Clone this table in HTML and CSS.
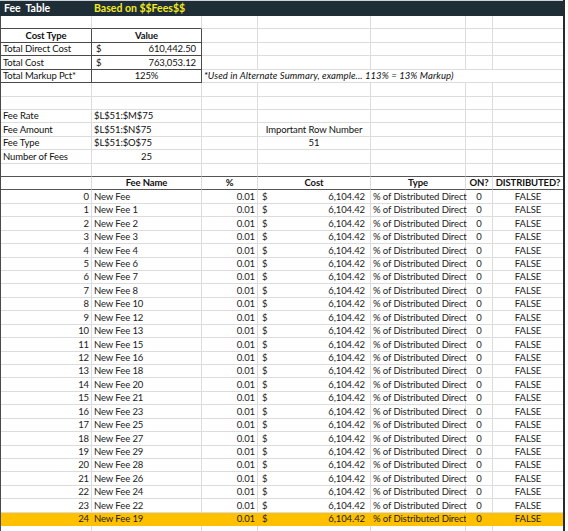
FILE: index.html
```html
<!DOCTYPE html>
<html>
<head>
<meta charset="utf-8">
<link rel="stylesheet" href="styles.css">
</head>
<body>
<div class="sheet">
  <div class="titlebar">
    <div class="t-title">Fee&nbsp; Table</div>
    <div class="t-sub">Based on $$Fees$$</div>
  </div>

  <div class="row"><div class="c bb-dark"></div><div class="c bb-dark"></div><div class="c"></div><div class="c"></div><div class="c"></div><div class="c"></div><div class="c"></div></div>
  <div class="row"><div class="c box b ctr">Cost Type</div><div class="c box b ctr">Value</div><div class="c"></div><div class="c"></div><div class="c"></div><div class="c"></div><div class="c"></div></div>
  <div class="row"><div class="c box">Total Direct Cost</div><div class="c box acct"><span>$</span><span>610,442.50</span></div><div class="c"></div><div class="c"></div><div class="c"></div><div class="c"></div><div class="c"></div></div>
  <div class="row"><div class="c box">Total Cost</div><div class="c box acct"><span>$</span><span>763,053.12</span></div><div class="c"></div><div class="c"></div><div class="c"></div><div class="c"></div><div class="c"></div></div>
  <div class="row"><div class="c box">Total Markup Pct*</div><div class="c box ctr">125%</div><div class="c note">*Used in Alternate Summary, example... 113% = 13% Markup)</div></div>
  <div class="row"><div class="c"></div><div class="c"></div><div class="c"></div><div class="c"></div><div class="c"></div><div class="c"></div><div class="c"></div></div>
  <div class="row"><div class="c"></div><div class="c"></div><div class="c"></div><div class="c"></div><div class="c"></div><div class="c"></div><div class="c"></div></div>
  <div class="row"><div class="c">Fee Rate</div><div class="c">$L$51:$M$75</div><div class="c"></div><div class="c"></div><div class="c"></div><div class="c"></div><div class="c"></div></div>
  <div class="row"><div class="c">Fee Amount</div><div class="c">$L$51:$N$75</div><div class="c"></div><div class="c ctr">Important Row Number</div><div class="c"></div><div class="c"></div><div class="c"></div></div>
  <div class="row"><div class="c">Fee Type</div><div class="c">$L$51:$O$75</div><div class="c"></div><div class="c ctr">51</div><div class="c"></div><div class="c"></div><div class="c"></div></div>
  <div class="row"><div class="c">Number of Fees</div><div class="c ctr">25</div><div class="c"></div><div class="c"></div><div class="c"></div><div class="c"></div><div class="c"></div></div>
  <div class="row rule"><div class="c"></div><div class="c"></div><div class="c"></div><div class="c"></div><div class="c"></div><div class="c"></div><div class="c"></div></div>
  <div class="row rule head"><div class="c"></div><div class="c ctr">Fee Name</div><div class="c ctr">%</div><div class="c ctr">Cost</div><div class="c ctr">Type</div><div class="c ctr">ON?</div><div class="c ctr">DISTRIBUTED?</div></div>

  <div class="row data"><div class="c rt">0</div><div class="c">New Fee</div><div class="c rt">0.01</div><div class="c acct"><span>$</span><span>6,104.42</span></div><div class="c">% of Distributed Direct</div><div class="c ctr">0</div><div class="c ctr">FALSE</div></div>
  <div class="row data"><div class="c rt">1</div><div class="c">New Fee 1</div><div class="c rt">0.01</div><div class="c acct"><span>$</span><span>6,104.42</span></div><div class="c">% of Distributed Direct</div><div class="c ctr">0</div><div class="c ctr">FALSE</div></div>
  <div class="row data"><div class="c rt">2</div><div class="c">New Fee 2</div><div class="c rt">0.01</div><div class="c acct"><span>$</span><span>6,104.42</span></div><div class="c">% of Distributed Direct</div><div class="c ctr">0</div><div class="c ctr">FALSE</div></div>
  <div class="row data"><div class="c rt">3</div><div class="c">New Fee 3</div><div class="c rt">0.01</div><div class="c acct"><span>$</span><span>6,104.42</span></div><div class="c">% of Distributed Direct</div><div class="c ctr">0</div><div class="c ctr">FALSE</div></div>
  <div class="row data"><div class="c rt">4</div><div class="c">New Fee 4</div><div class="c rt">0.01</div><div class="c acct"><span>$</span><span>6,104.42</span></div><div class="c">% of Distributed Direct</div><div class="c ctr">0</div><div class="c ctr">FALSE</div></div>
  <div class="row data"><div class="c rt">5</div><div class="c">New Fee 6</div><div class="c rt">0.01</div><div class="c acct"><span>$</span><span>6,104.42</span></div><div class="c">% of Distributed Direct</div><div class="c ctr">0</div><div class="c ctr">FALSE</div></div>
  <div class="row data"><div class="c rt">6</div><div class="c">New Fee 7</div><div class="c rt">0.01</div><div class="c acct"><span>$</span><span>6,104.42</span></div><div class="c">% of Distributed Direct</div><div class="c ctr">0</div><div class="c ctr">FALSE</div></div>
  <div class="row data"><div class="c rt">7</div><div class="c">New Fee 8</div><div class="c rt">0.01</div><div class="c acct"><span>$</span><span>6,104.42</span></div><div class="c">% of Distributed Direct</div><div class="c ctr">0</div><div class="c ctr">FALSE</div></div>
  <div class="row data"><div class="c rt">8</div><div class="c">New Fee 10</div><div class="c rt">0.01</div><div class="c acct"><span>$</span><span>6,104.42</span></div><div class="c">% of Distributed Direct</div><div class="c ctr">0</div><div class="c ctr">FALSE</div></div>
  <div class="row data"><div class="c rt">9</div><div class="c">New Fee 12</div><div class="c rt">0.01</div><div class="c acct"><span>$</span><span>6,104.42</span></div><div class="c">% of Distributed Direct</div><div class="c ctr">0</div><div class="c ctr">FALSE</div></div>
  <div class="row data"><div class="c rt">10</div><div class="c">New Fee 13</div><div class="c rt">0.01</div><div class="c acct"><span>$</span><span>6,104.42</span></div><div class="c">% of Distributed Direct</div><div class="c ctr">0</div><div class="c ctr">FALSE</div></div>
  <div class="row data"><div class="c rt">11</div><div class="c">New Fee 15</div><div class="c rt">0.01</div><div class="c acct"><span>$</span><span>6,104.42</span></div><div class="c">% of Distributed Direct</div><div class="c ctr">0</div><div class="c ctr">FALSE</div></div>
  <div class="row data"><div class="c rt">12</div><div class="c">New Fee 16</div><div class="c rt">0.01</div><div class="c acct"><span>$</span><span>6,104.42</span></div><div class="c">% of Distributed Direct</div><div class="c ctr">0</div><div class="c ctr">FALSE</div></div>
  <div class="row data"><div class="c rt">13</div><div class="c">New Fee 18</div><div class="c rt">0.01</div><div class="c acct"><span>$</span><span>6,104.42</span></div><div class="c">% of Distributed Direct</div><div class="c ctr">0</div><div class="c ctr">FALSE</div></div>
  <div class="row data"><div class="c rt">14</div><div class="c">New Fee 20</div><div class="c rt">0.01</div><div class="c acct"><span>$</span><span>6,104.42</span></div><div class="c">% of Distributed Direct</div><div class="c ctr">0</div><div class="c ctr">FALSE</div></div>
  <div class="row data"><div class="c rt">15</div><div class="c">New Fee 21</div><div class="c rt">0.01</div><div class="c acct"><span>$</span><span>6,104.42</span></div><div class="c">% of Distributed Direct</div><div class="c ctr">0</div><div class="c ctr">FALSE</div></div>
  <div class="row data"><div class="c rt">16</div><div class="c">New Fee 23</div><div class="c rt">0.01</div><div class="c acct"><span>$</span><span>6,104.42</span></div><div class="c">% of Distributed Direct</div><div class="c ctr">0</div><div class="c ctr">FALSE</div></div>
  <div class="row data"><div class="c rt">17</div><div class="c">New Fee 25</div><div class="c rt">0.01</div><div class="c acct"><span>$</span><span>6,104.42</span></div><div class="c">% of Distributed Direct</div><div class="c ctr">0</div><div class="c ctr">FALSE</div></div>
  <div class="row data"><div class="c rt">18</div><div class="c">New Fee 27</div><div class="c rt">0.01</div><div class="c acct"><span>$</span><span>6,104.42</span></div><div class="c">% of Distributed Direct</div><div class="c ctr">0</div><div class="c ctr">FALSE</div></div>
  <div class="row data"><div class="c rt">19</div><div class="c">New Fee 29</div><div class="c rt">0.01</div><div class="c acct"><span>$</span><span>6,104.42</span></div><div class="c">% of Distributed Direct</div><div class="c ctr">0</div><div class="c ctr">FALSE</div></div>
  <div class="row data"><div class="c rt">20</div><div class="c">New Fee 28</div><div class="c rt">0.01</div><div class="c acct"><span>$</span><span>6,104.42</span></div><div class="c">% of Distributed Direct</div><div class="c ctr">0</div><div class="c ctr">FALSE</div></div>
  <div class="row data"><div class="c rt">21</div><div class="c">New Fee 26</div><div class="c rt">0.01</div><div class="c acct"><span>$</span><span>6,104.42</span></div><div class="c">% of Distributed Direct</div><div class="c ctr">0</div><div class="c ctr">FALSE</div></div>
  <div class="row data"><div class="c rt">22</div><div class="c">New Fee 24</div><div class="c rt">0.01</div><div class="c acct"><span>$</span><span>6,104.42</span></div><div class="c">% of Distributed Direct</div><div class="c ctr">0</div><div class="c ctr">FALSE</div></div>
  <div class="row data"><div class="c rt">23</div><div class="c">New Fee 22</div><div class="c rt">0.01</div><div class="c acct"><span>$</span><span>6,104.42</span></div><div class="c">% of Distributed Direct</div><div class="c ctr">0</div><div class="c ctr">FALSE</div></div>
  <div class="row data hl"><div class="c rt">24</div><div class="c">New Fee 19</div><div class="c rt">0.01</div><div class="c acct"><span>$</span><span>6,104.42</span></div><div class="c">% of Distributed Direct</div><div class="c ctr">0</div><div class="c ctr">FALSE</div></div>
  <div class="row"><div class="c"></div><div class="c"></div><div class="c"></div><div class="c"></div><div class="c"></div><div class="c"></div><div class="c"></div></div>
</div>
</body>
</html>
```

FILE: styles.css
```css
html, body {
  margin: 0;
  padding: 0;
  background: #ffffff;
}

body {
  font-family: Lato, "Open Sans", sans-serif;
  font-size: 9.5px;
  letter-spacing: -0.1px;
  color: #111111;
  overflow: hidden;
}

.sheet {
  width: 565px;
  box-sizing: border-box;
  border-left: 1px solid #4a4a4a;
  border-right: 2px solid #2a2a2a;
}

.titlebar {
  display: grid;
  grid-template-columns: 91px 1fr;
  height: 16px;
  box-sizing: border-box;
  border-top: 1px solid #cfd3d6;
  background: #1f2d37;
  margin-left: -1px;
  padding-left: 1px;
  font-weight: 700;
  font-size: 10.5px;
  letter-spacing: 0;
  line-height: 15px;
}

.t-title {
  color: #ffffff;
  padding-left: 3px;
}

.t-sub {
  color: #f4ea1e;
  padding-left: 2px;
}

.row {
  display: grid;
  grid-template-columns: 91px 110px 56px 113px 95px 27px 70px;
  height: 13.43px;
}

.c {
  box-sizing: border-box;
  border-right: 1px solid #dcdcdc;
  border-bottom: 1px solid #dcdcdc;
  padding: 0 2px;
  display: flex;
  align-items: flex-end;
  white-space: nowrap;
  line-height: 12px;
  min-width: 0;
}

.c:last-child {
  border-right: none;
}

.ctr {
  justify-content: center;
}

.rt {
  justify-content: flex-end;
}

.b {
  font-weight: 700;
}

.acct {
  justify-content: space-between;
  padding-left: 4px;
  padding-right: 5px;
}

.box {
  border-right-color: #4a4a4a;
  border-bottom-color: #4a4a4a;
}

.bb-dark {
  border-bottom-color: #4a4a4a;
}

.note {
  grid-column: 3 / 8;
  font-style: italic;
  letter-spacing: 0.1px;
  border-right: none;
}

.rule .c {
  border-bottom-color: #555555;
}

.head .c {
  font-weight: 700;
}

.data .c {
  color: #222222;
}

.hl .c {
  background: #ffc000;
  border-right-color: #ffc000;
  border-bottom-color: #ffc000;
}
```
